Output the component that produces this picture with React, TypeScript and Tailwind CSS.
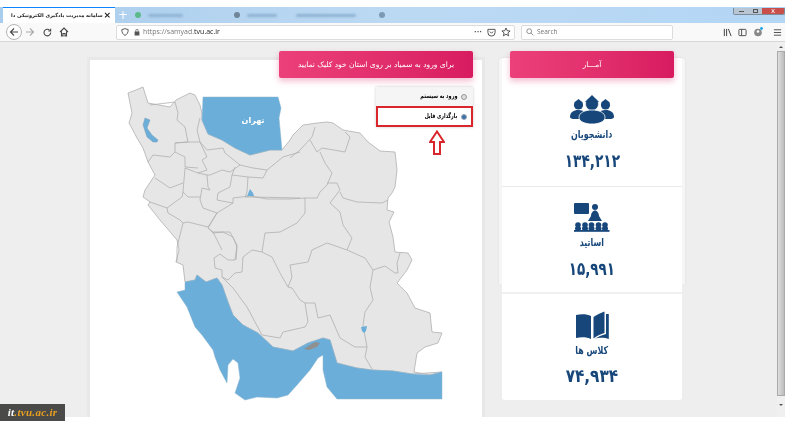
import React from "react";

const land = "128,93 136,90 143,87 148,103 170,107 176,100 190,93 195,95 200,105 202,113 202,120 208,134 222,140 235,148 250,155 270,150 282,150 290,140 293,135 303,125 317,123 327,122 333,123 343,130 360,133 368,142 380,151 395,152 397,170 395,187 392,193 388,198 387,210 394,212 389,222 393,237 395,252 408,253 412,260 407,270 397,283 407,293 415,308 430,313 432,332 442,333 438,343 425,347 417,353 414,372 430,375 442,372 412,374 393,371 372,370 357,368 337,363 330,340 323,338 308,343 293,351 273,347 258,333 243,325 233,315 228,302 222,285 217,278 206,282 197,275 195,280 185,282 183,265 176,262 179,250 177,240 160,220 148,205 150,202 143,197 145,190 155,175 148,162 143,148 137,138 129,123 132,113";
const caspian = "203,97 278,97 281,108 279,118 282,150 270,150 250,155 235,148 222,140 208,134 202,120";
const urmia = "145,118 150,120 147,128 152,135 158,140 157,142 153,142 147,137 143,125";
const gulf = "217,278 222,285 228,302 233,315 243,325 258,333 273,347 293,351 308,343 323,338 330,340 337,363 357,368 372,370 393,371 412,374 430,375 442,372 442,399 337,399 327,387 323,370 323,355 318,358 310,370 297,385 288,395 277,398 257,397 245,400 235,393 240,378 238,363 233,359 228,365 227,383 220,370 215,357 213,350 202,335 195,327 187,307 177,292 185,290 185,282 195,280 197,275 206,282";

const lines = [
  "233,198 250,196 267,199 290,199 305,198 317,198 320,192 327,185 332,173 325,163 320,152",
  "290,158 300,150 312,137 315,127",
  "310,140 317,152 322,148 345,152 350,137 345,132",
  "305,198 305,213 297,223 280,232 265,233 262,252 252,250 243,257 242,272 235,273 228,280 222,277 222,270 215,268 214,258 220,254 228,260 235,260 237,245 230,232 213,232 208,228 217,213 233,203 233,198",
  "327,183 337,183 340,190 330,203 340,212 343,225 352,238 347,250 327,243 312,250 308,262 290,265 292,277 288,287 280,273 272,257 262,252",
  "340,192 343,198 357,202 382,203 388,200",
  "347,250 365,258 373,270 385,266 395,273 398,273 397,263 400,253",
  "373,270 370,287 373,300 365,312 363,325 367,347 365,357 372,369",
  "288,287 292,288 300,300 305,303 315,303 318,318 330,315 340,338 355,347 367,347",
  "305,303 308,322 305,327 283,332 280,338 262,335 247,307 233,288 225,280 222,277",
  "222,250 213,232",
  "150,105 175,102 178,113 177,120 185,127 188,142 200,142 197,130 200,118",
  "175,143 188,142 175,143 175,152 185,157 185,167 198,168",
  "148,162 153,155 170,157 175,152",
  "200,142 207,157 202,160 207,170 198,173 185,168 183,192 182,197 167,208 168,213 180,220 183,223 188,222 208,227 217,213 203,208 200,200 202,188 210,190 208,187 207,175 198,173",
  "200,142 207,150 223,148 225,153 240,165 253,168 267,170 283,157 300,152",
  "240,165 230,172 222,170 210,175 207,175",
  "235,167 232,175 248,177 247,192 245,197 252,197 300,198",
  "267,170 263,178 248,177",
  "232,175 230,187 218,193 217,200 227,202 233,203",
  "155,178 170,188 183,183",
  "183,192 188,197 200,197",
  "150,202 167,208",
  "183,223 177,247 177,260 176,262",
  "208,228 213,233 223,232 233,237 237,247 236,260",
];

function IranMap() {
  return (
    <svg viewBox="120 80 330 325" className="ml-[30px] mt-[20px] block h-[325px] w-[330px]">
      <polygon points={land} fill="#e6e6e6" stroke="#b0b0b0" strokeWidth="0.8" strokeLinejoin="round" />
      {lines.map((l, i) => (
        <polyline key={i} points={l} fill="none" stroke="#b0b0b0" strokeWidth="0.8" strokeLinejoin="round" />
      ))}
      <polygon points={caspian} fill="#6baed9" stroke="#8db5cf" strokeWidth="0.5" />
      <polygon points={urmia} fill="#6baed9" stroke="#7f9fb5" strokeWidth="0.5" />
      <polygon points={gulf} fill="#6baed9" stroke="#8db5cf" strokeWidth="0.5" />
      <polygon points="247,196 250,189 253,193 254,196" fill="#6baed9" />
      <polygon points="361,327 367,326 366,331 364,333 362,331" fill="#6baed9" />
      <polygon points="304,349 310,345 315,342 320,343 317,347 309,350" fill="#909090" />
      <text x="253" y="123" textAnchor="middle" fill="#fff" fontSize="8" fontWeight="700" fontFamily="'DejaVu Sans', sans-serif">تهران</text>
    </svg>
  );
}

function Students() {
  return (
    <svg viewBox="0 0 44 29" className="h-[29px] w-[44px]" fill="#16467a">
      <circle cx="8.500" cy="10" r="4.600" />
      <path d="M4 8 8.500 4l4.500 4z" />
      <path d="M0 22c0-5 4-7 8-7s6 1 7 3l-3 6H5c-3 0-5-.5-5-2z" />
      <circle cx="35.500" cy="10" r="4.600" />
      <path d="M31 8l4.500-4 4.500 4z" />
      <path d="M44 22c0-5-4-7-8-7s-6 1-7 3l3 6h7c3 0 5-.5 5-2z" />
      <circle cx="22" cy="9" r="6.500" stroke="#fff" strokeWidth="0.6" />
      <path d="M15 7 22 0l7 7z" />
      <path d="M9 22.500c0-5 6-7.500 13-7.500s13 2.500 13 7.500c0 4-6 6.500-13 6.500S9 26.500 9 22.500z" stroke="#fff" strokeWidth="0.8" />
    </svg>
  );
}

function Teacher() {
  return (
    <svg viewBox="0 0 36 29" className="h-[29px] w-[36px]" fill="#16467a">
      <rect x="0" y="0" width="15" height="11" rx="1" />
      <circle cx="21" cy="4" r="3" />
      <path d="M17 13c0-3 2-5.500 4-5.500s4 2.500 4 5.500l3 5H14z" />
      {[4, 11, 17.5, 24.5, 31].map((x) => (
        <g key={x}>
          <circle cx={x} cy="22" r="2.800" />
          <rect x={x - 3} y="24" width="6" height="3" rx="1" />
        </g>
      ))}
      <rect x="0" y="27" width="35.500" height="1.800" />
    </svg>
  );
}

function Book() {
  return (
    <svg viewBox="0 0 33 29" className="h-[29px] w-[33px]" fill="#16467a">
      <path d="M0 4c5-1 11-1 15 1v23c-4-2-10-2-15-1z" />
      <path d="M17.500 6c3-2 7-4 11-5.500V22c-4 1-8 3-11 5.500z" />
      <path d="M30 3h2.800v25c-4-1.500-10-1.500-14-.2 3-1.800 7-3.800 11.200-4.800z" />
    </svg>
  );
}

function Tile({ pt, h, icon, label, num, gap, numScale }: { pt: string; h: string; icon: React.ReactNode; label: string; num: string; gap: string; numScale: string }) {
  return (
    <div className={`flex flex-col items-center ${pt} ${h}`}>
      {icon}
      <div className="mt-[3px] scale-x-[0.72] text-[11px] font-bold leading-[16px] text-[#16467a]">{label}</div>
      <div className={`${gap} ${numScale} text-[18px] font-bold leading-[22px] text-[#16467a]`}>{num}</div>
    </div>
  );
}

const pink = "absolute z-10 flex h-[27px] items-center justify-center rounded-[2px] bg-gradient-to-r from-[#ec407a] to-[#d81b60] text-[7.5px] text-white shadow-[0_3px_6px_rgba(216,27,96,0.3)]";

export default function App() {
  return (
    <div className="flex h-[430px] w-[792px] flex-col overflow-hidden bg-white pr-[7px] pt-[7px] font-['DejaVu_Sans',sans-serif] blur-[0.3px]">
      {/* tab bar */}
      <div className="relative flex h-[16px] shrink-0 items-stretch bg-gradient-to-r from-[#a9cdec] via-[#bcd9f3] to-[#b3d6f5]">
        <div className="ml-[3px] flex w-[112px] shrink-0 items-center justify-between border-t border-[#0a84ff] bg-white pl-[8px] pr-[4px]">
          <span className="whitespace-nowrap text-[5px] font-bold text-[#222]" dir="rtl">سامانه مدیریت یادگیری الکترونیکی دا</span>
          <span className="text-[9px] font-bold leading-none text-[#222]">×</span>
        </div>
        <div className="ml-[3px] flex items-center gap-[7px]">
          <span className="text-[12px] leading-none text-white">+</span>
          <span className="h-[6px] w-[6px] rounded-full bg-[#5bb98c]" />
          <span className="h-[3px] w-[35px] rounded bg-[#8fb3d3] blur-[1px]" />
          <span className="ml-[44px] h-[6px] w-[6px] rounded-full bg-[#6f8598] blur-[0.5px]" />
          <span className="h-[3px] w-[30px] rounded bg-[#8fb3d3] blur-[1px]" />
          <span className="ml-[12px] h-[3px] w-[60px] rounded bg-[#8fb3d3] blur-[1px]" />
          <span className="ml-[16px] h-[6px] w-[6px] rounded-full bg-[#7a9ab5] blur-[0.5px]" />
        </div>
        <div className="absolute right-0 top-[1px] flex h-[7px] w-[52px] overflow-hidden rounded-b-[2px] border border-t-0 border-[#7f8c99]">
          <div className="flex flex-1 items-center justify-center bg-[#b8c6d3]"><span className="h-px w-[5px] bg-[#555]" /></div>
          <div className="flex flex-1 items-center justify-center bg-[#b8c6d3]"><span className="h-[4px] w-[5px] border border-[#555]" /></div>
          <div className="flex w-[22px] items-center justify-center bg-[#c9504a] text-[7px] leading-none text-white">x</div>
        </div>
      </div>

      {/* toolbar */}
      <div className="flex h-[19px] shrink-0 items-center border-b border-[#d7d7d7] bg-[#f9f9fa] text-[#444]">
        <div className="ml-[6px] flex h-[16px] w-[16px] items-center justify-center rounded-full border border-[#b5b5b5] bg-white">
          <svg viewBox="0 0 10 10" className="h-[10px] w-[10px]" fill="none" stroke="#444" strokeWidth="1.100"><path d="M9 5H1.500M5 1.500 1.500 5 5 8.500" /></svg>
        </div>
        <svg viewBox="0 0 10 10" className="ml-[3px] h-[10px] w-[10px]" fill="none" stroke="#aaa" strokeWidth="1.100"><path d="M1 5h7.500M5 1.500 8.500 5 5 8.500" /></svg>
        <svg viewBox="0 0 10 10" className="ml-[8px] h-[9px] w-[9px]" fill="none" stroke="#444" strokeWidth="1.200"><path d="M8.500 5a3.700 3.700 0 1 1-1.200-2.700M8.500 .8v2.500H6" /></svg>
        <svg viewBox="0 0 10 10" className="ml-[7px] h-[10px] w-[10px]" fill="none" stroke="#444" strokeWidth="1.100"><path d="M1 5 5 1l4 4M2.500 4.500V9H4V6.500h2V9h1.500V4.500" /></svg>
        <div className="ml-[47px] flex h-[15px] w-[399px] items-center rounded-[2px] border border-[#dcdcdc] bg-white">
          <svg viewBox="0 0 10 10" className="ml-[4px] h-[8px] w-[8px]" fill="none" stroke="#555" strokeWidth="1.200"><path d="M5 .8 9 2c0 4-1.500 6-4 7.300C2.500 8 1 6 1 2z" /></svg>
          <svg viewBox="0 0 10 10" className="ml-[4px] h-[8px] w-[8px]" fill="#555"><path d="M2 4.500h6V9.500H2zM3.200 4.500V3a1.800 1.800 0 0 1 3.600 0v1.500H6V3a1 1 0 0 0-2 0v1.500z" /></svg>
          <span className="ml-[2px] font-['Open_Sans',sans-serif] text-[7px] text-[#777]">https://samyad.<span className="text-[#222]">tvu.ac.ir</span></span>
          <div className="ml-auto mr-[3px] flex items-center gap-[5px]">
            <span className="text-[7px] font-bold leading-none text-[#555]">···</span>
            <svg viewBox="0 0 10 10" className="h-[9px] w-[9px]" fill="none" stroke="#555" strokeWidth="1.100"><path d="M1 1.500h8V5a4 4 0 0 1-8 0zM3.200 4 5 5.800 6.800 4" /></svg>
            <svg viewBox="0 0 10 10" className="h-[10px] w-[10px]" fill="none" stroke="#444" strokeWidth="0.900"><path d="m5 1 1.200 2.700 2.900.3-2.200 1.900.7 2.900L5 7.300 2.400 8.800l.7-2.900L.9 4l2.900-.3z" /></svg>
          </div>
        </div>
        <div className="ml-[6px] flex h-[15px] w-[152px] items-center rounded-[2px] border border-[#dcdcdc] bg-white">
          <svg viewBox="0 0 10 10" className="ml-[4px] h-[8px] w-[8px]" fill="none" stroke="#777" strokeWidth="1"><circle cx="4" cy="4" r="3" /><path d="m6.200 6.200 3 3" /></svg>
          <span className="ml-[3px] font-['Open_Sans',sans-serif] text-[6.5px] text-[#777]">Search</span>
        </div>
        <svg viewBox="0 0 10 10" className="ml-[50px] h-[9px] w-[9px]" fill="none" stroke="#444" strokeWidth="1.100"><path d="M1.500 1v8M4 1v8M6 1l3 8" /></svg>
        <svg viewBox="0 0 10 10" className="ml-[6px] h-[9px] w-[9px]" fill="none" stroke="#444" strokeWidth="1"><rect x="1" y="1.500" width="8" height="7" rx="1" /><path d="M4 1.500v7" /></svg>
        <svg viewBox="0 0 10 10" className="ml-[6px] h-[10px] w-[10px]"><circle cx="5" cy="5.500" r="3.800" fill="#888" /><circle cx="5" cy="4.500" r="1.300" fill="#fff" /><circle cx="8.500" cy="1.500" r="1.400" fill="#1aa3e8" /></svg>
        <svg viewBox="0 0 10 10" className="ml-[10px] h-[9px] w-[9px]" fill="none" stroke="#444" strokeWidth="1"><path d="M1 2h8M1 5h8M1 8h8" /></svg>
      </div>

      {/* content */}
      <div className="relative flex h-[375px] items-start overflow-hidden bg-[#eeeeee] pl-[90px] pt-[16px]">
        <div className="relative mt-[2px] h-[358px] w-[392px] bg-white shadow-[0_0_0_3px_#e8e8e8]">
          <div className={`${pink} left-[189px] top-[-9px] w-[194px]`}>برای ورود به سمیاد بر روی استان خود کلیک نمایید</div>
          <IranMap />
          <div className="absolute left-[286px] top-[27px] w-[97px] text-[6.5px] font-bold text-black shadow-[0_0_3px_rgba(0,0,0,0.2)]">
            <div className="flex h-[19px] items-center justify-end bg-[#f5f5f5] pr-[6px]">
              <span className="origin-right scale-x-[0.75] whitespace-nowrap">ورود به سیستم</span>
              <span className="ml-[4px] h-[6px] w-[6px] rounded-full border border-[#999] bg-[#ddd]" />
            </div>
            <div className="flex h-[21px] items-center justify-end border-2 border-[#d9262c] bg-white pr-[4px]">
              <span className="origin-right scale-x-[0.72] whitespace-nowrap">بارگذاری فایل</span>
              <span className="ml-[4px] h-[6px] w-[6px] rounded-full border border-[#9ab] bg-[#3f6fa5]" />
            </div>
            <svg viewBox="0 0 16 26" className="absolute left-[53px] top-[43px] h-[26px] w-[16px]" fill="#fff" stroke="#d9262c" strokeWidth="2"><path d="M8 1.500 15 12h-4v12H5V12H1z" /></svg>
          </div>
        </div>

        <div className="relative ml-[20px] w-[180px]">
          <div className="absolute left-[-3px] top-0 h-[227px] w-[186px] rounded-[3px] bg-[#f6f6f6] shadow-[0_0_2px_#dcdcdc]" />
          <div className={`${pink} left-[8px] top-[-7px] w-[164px]`}>آمـــار</div>
          <div className="relative rounded-[3px] bg-white">
            <Tile pt="pt-[37px]" h="h-[129px] border-b border-[#ececec]" icon={<Students />} label="دانشجویان" gap="mt-[7px]" numScale="scale-x-[0.76]" num="۱۳۴,۲۱۲" />
            <Tile pt="pt-[16px]" h="h-[107px] border-b-2 border-[#f0f0f0]" icon={<Teacher />} label="اساتید" gap="mt-[7px]" numScale="scale-x-[0.75]" num="۱۵,۹۹۱" />
            <Tile pt="pt-[17px]" h="h-[106px]" icon={<Book />} label="کلاس ها" gap="mt-[6px]" numScale="scale-x-[0.85]" num="۷۴,۹۳۴" />
          </div>
        </div>

        <div className="absolute bottom-0 right-0 top-0 flex w-[8px] flex-col items-center bg-[#f0f0f0]">
          <span className="mt-[4px] h-0 w-0 border-x-[2px] border-b-[2px] border-x-transparent border-b-[#555]" />
          <div className="mt-[3px] h-[345px] w-full border border-[#aaa] bg-gradient-to-r from-[#dedede] to-[#bcbcbc]" />
          <span className="mt-[8px] h-0 w-0 border-x-[2px] border-t-[2px] border-x-transparent border-t-[#555]" />
        </div>
      </div>

      <div className="absolute left-0 top-[404px] flex h-[17px] w-[65px] items-center justify-center bg-[#4a4a48] font-['Liberation_Serif',serif] text-[11px] font-bold italic tracking-[0.3px]">
        <span className="text-white">it</span><span className="text-[#e8a020]">.tvu.ac.ir</span>
      </div>
    </div>
  );
}
